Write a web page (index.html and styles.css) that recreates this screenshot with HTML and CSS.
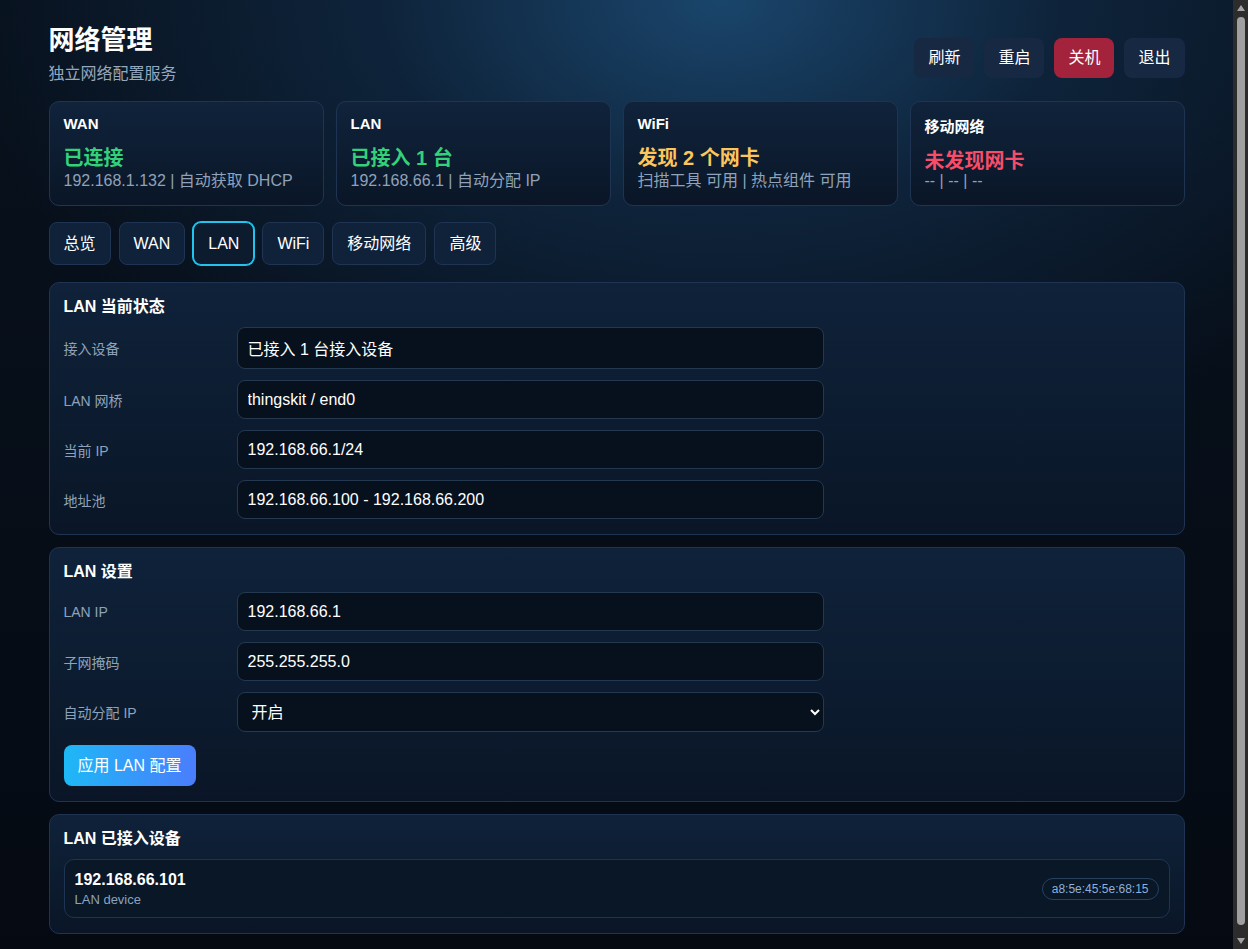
FILE: index.html
```html
<!DOCTYPE html>
<html lang="zh-CN">
<head>
<meta charset="utf-8">
<title>网络管理</title>
<link rel="stylesheet" href="styles.css">
</head>
<body>
<div class="page">
  <header class="header">
    <div class="brand">
      <h1 class="title">网络管理</h1>
      <div class="subtitle">独立网络配置服务</div>
    </div>
    <div class="actions">
      <button class="btn">刷新</button>
      <button class="btn">重启</button>
      <button class="btn btn-danger">关机</button>
      <button class="btn">退出</button>
    </div>
  </header>

  <section class="cards">
    <div class="card">
      <div class="card-label">WAN</div>
      <div class="card-value ok">已连接</div>
      <div class="card-sub">192.168.1.132 | 自动获取 DHCP</div>
    </div>
    <div class="card">
      <div class="card-label">LAN</div>
      <div class="card-value ok">已接入 1 台</div>
      <div class="card-sub">192.168.66.1 | 自动分配 IP</div>
    </div>
    <div class="card">
      <div class="card-label">WiFi</div>
      <div class="card-value warn">发现 2 个网卡</div>
      <div class="card-sub">扫描工具 可用 | 热点组件 可用</div>
    </div>
    <div class="card card-cjk">
      <div class="card-label">移动网络</div>
      <div class="card-value bad">未发现网卡</div>
      <div class="card-sub">-- | -- | --</div>
    </div>
  </section>

  <nav class="tabs">
    <button class="tab">总览</button>
    <button class="tab">WAN</button>
    <button class="tab active">LAN</button>
    <button class="tab">WiFi</button>
    <button class="tab">移动网络</button>
    <button class="tab">高级</button>
  </nav>

  <section class="panel">
    <h2 class="panel-title">LAN 当前状态</h2>
    <div class="form">
      <label class="label">接入设备</label>
      <input class="input input-tall" value="已接入 1 台接入设备" readonly>
      <label class="label">LAN 网桥</label>
      <input class="input" value="thingskit / end0" readonly>
      <label class="label">当前 IP</label>
      <input class="input" value="192.168.66.1/24" readonly>
      <label class="label">地址池</label>
      <input class="input" value="192.168.66.100 - 192.168.66.200" readonly>
    </div>
  </section>

  <section class="panel">
    <h2 class="panel-title">LAN 设置</h2>
    <div class="form">
      <label class="label">LAN IP</label>
      <input class="input" value="192.168.66.1">
      <label class="label">子网掩码</label>
      <input class="input" value="255.255.255.0">
      <label class="label">自动分配 IP</label>
      <select class="input select">
        <option>开启</option>
        <option>关闭</option>
      </select>
    </div>
    <button class="primary">应用 LAN 配置</button>
  </section>

  <section class="panel">
    <h2 class="panel-title">LAN 已接入设备</h2>
    <div class="device">
      <div class="device-info">
        <div class="device-ip">192.168.66.101</div>
        <div class="device-name">LAN device</div>
      </div>
      <span class="pill">a8:5e:45:5e:68:15</span>
    </div>
  </section>
</div>

<div class="scrollbar" aria-hidden="true">
  <span class="sb-arrow sb-up"></span>
  <span class="sb-thumb"></span>
  <span class="sb-arrow sb-down"></span>
</div>
</body>
</html>
```

FILE: styles.css
```css
html {
  background: #050a12;
}
body {
  margin: 0;
  padding-right: 15px;
  min-height: 100vh;
  font-family: "Liberation Sans", Arial, "Noto Sans CJK SC", sans-serif;
  color: #ffffff;
  background:
    radial-gradient(ellipse 760px 480px at 720px 0px, rgba(27, 72, 112, 0.95), rgba(19, 50, 82, 0.55) 45%, rgba(8, 18, 30, 0) 100%),
    linear-gradient(180deg, #08111d 0%, #060d17 60%, #050a12 100%);
  background-color: #050a12;
}
.page {
  width: 1136px;
  margin: 0 auto;
  padding: 24px 0 16px;
}
.header {
  display: flex;
  justify-content: space-between;
  align-items: flex-start;
  margin-bottom: 17px;
}
.title {
  margin: 0;
  font-size: 26px;
  line-height: 32px;
  font-weight: 700;
}
.subtitle {
  margin-top: 8px;
  font-size: 16px;
  line-height: 20px;
  color: #94a8bf;
}
.actions {
  display: flex;
  gap: 10px;
  margin-top: 14px;
}
.btn {
  font-family: inherit;
  font-size: 16px;
  line-height: 20px;
  padding: 10px 14px;
  border: 0;
  border-radius: 8px;
  background: #172843;
  color: #ffffff;
}
.btn-danger {
  background: #a2233b;
}
.cards {
  display: grid;
  grid-template-columns: repeat(4, 1fr);
  gap: 12px;
  margin-bottom: 16px;
}
.card {
  border: 1px solid #1f3453;
  border-radius: 10px;
  padding: 12px 14px 14px;
  background: linear-gradient(180deg, #10233b 0%, #0a1627 100%);
}
.card-label {
  font-size: 15px;
  line-height: 20px;
  font-weight: 700;
}
.card-value {
  margin-top: 13px;
  font-size: 20px;
  line-height: 22px;
  font-weight: 700;
}
.card-cjk .card-label {
  margin-top: 3px;
}
.card-cjk .card-value {
  margin-top: 13px;
}
.card-cjk .card-sub {
  margin-top: 0;
  line-height: 18px;
}
.card-sub {
  margin-top: 2px;
  font-size: 16px;
  line-height: 20px;
  color: #8fa2b9;
}
.ok { color: #33d27a; }
.warn { color: #fbc65b; }
.bad { color: #f74d69; }

.tabs {
  display: flex;
  gap: 8px;
  margin-bottom: 17px;
}
.tab {
  font-family: inherit;
  font-size: 16px;
  line-height: 21px;
  padding: 10px 14px;
  border: 1px solid #1f3453;
  border-radius: 8px;
  background: #10223a;
  color: #ffffff;
}
.tab.active {
  background: #0c1b2e;
  border-color: #22c4ee;
  box-shadow: 0 0 0 1px #22c4ee;
}
.panel {
  border: 1px solid #1f3453;
  border-radius: 10px;
  padding: 14px 14px 15px;
  margin-bottom: 12px;
  background: linear-gradient(180deg, #0f223a 0%, #0a1627 100%);
}
.panel-title {
  margin: 0 0 10px;
  font-size: 16px;
  line-height: 20px;
  font-weight: 700;
}
.form {
  display: grid;
  grid-template-columns: 161px 1fr;
  column-gap: 12px;
  row-gap: 11px;
  max-width: 760px;
  align-items: center;
}
.label {
  font-size: 14px;
  color: #8ea3bb;
}
.input {
  box-sizing: border-box;
  height: 39px;
  width: 100%;
  padding: 0 10px;
  font-family: "Liberation Sans", Arial, "Noto Sans CJK SC", sans-serif;
  font-size: 16px;
  color: #ffffff;
  background: #07111d;
  border: 1px solid #24384f;
  border-radius: 8px;
  outline: none;
}
.input-tall {
  height: 42px;
}
.select {
  height: 40px;
  padding: 0 8px 0 10px;
}
.primary {
  margin-top: 13px;
  font-family: inherit;
  font-size: 16px;
  line-height: 21px;
  padding: 10px 14px;
  border: 0;
  border-radius: 8px;
  color: #ffffff;
  background: linear-gradient(90deg, #1eb8f6 0%, #4a7dfd 100%);
}
.device {
  display: flex;
  justify-content: space-between;
  align-items: center;
  padding: 10px 10px 9px;
  border: 1px solid #1f3453;
  border-radius: 10px;
  background: #091727;
}
.device-ip {
  font-size: 16px;
  line-height: 19px;
  font-weight: 700;
}
.device-name {
  margin-top: 2px;
  font-size: 13px;
  line-height: 17px;
  color: #8ea3bb;
}
.pill {
  font-size: 12px;
  line-height: 16px;
  padding: 2px 9px;
  border: 1px solid #27415f;
  border-radius: 999px;
  color: #8eb0d8;
}

/* browser scrollbar overlay */
.scrollbar {
  position: fixed;
  top: 0;
  right: 0;
  bottom: 0;
  width: 15px;
  background: #2c2c2c;
  display: flex;
  flex-direction: column;
  align-items: center;
}
.sb-arrow {
  width: 0;
  height: 0;
  border-left: 4px solid transparent;
  border-right: 4px solid transparent;
}
.sb-up {
  margin-top: 5px;
  border-bottom: 6px solid #a3a3a3;
}
.sb-down {
  margin-bottom: 5px;
  border-top: 6px solid #a3a3a3;
}
.sb-thumb {
  flex: 1;
  width: 8px;
  margin: 6px 0 13px;
  border-radius: 4px;
  background: #a0a0a0;
}
```
